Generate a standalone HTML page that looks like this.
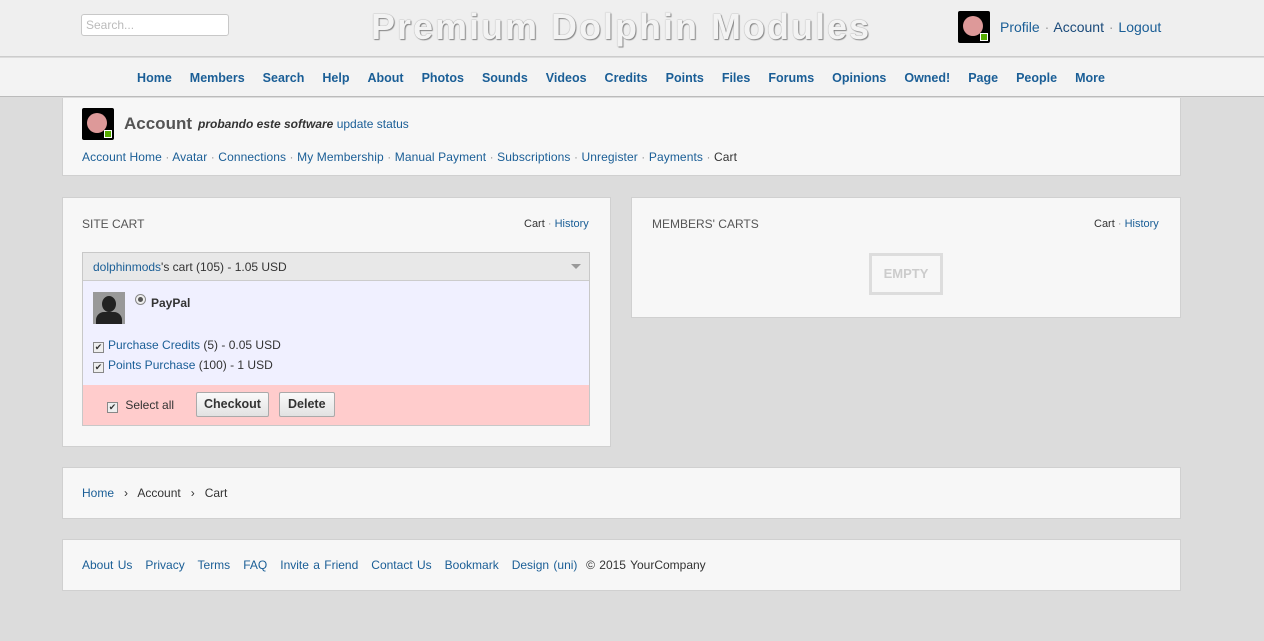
<!DOCTYPE html>
<html><head><meta charset="utf-8"><style>
*{box-sizing:border-box;margin:0;padding:0}
body{width:1264px;height:641px;background:#dcdcdc;font-family:"Liberation Sans",Arial,sans-serif;font-size:12px;color:#333;position:relative;overflow:hidden}
a{color:#1a5e96;text-decoration:none}
.abs{position:absolute}
.top{left:0;top:0;width:1264px;height:57px;background:#efefef;border-bottom:1px solid #ccc}
.nav{left:0;top:58px;width:1264px;height:39px;background:#f3f3f3;border-bottom:1px solid #bbb;text-align:center;font-weight:bold;font-size:12.5px;line-height:40px;padding-right:22px}
.nav a{margin:0 9px}
.box{background:#f7f7f7;border:1px solid #d0d0d0}
.sep{color:#999}
.btn{display:inline-block;border:1px solid #aaa;border-radius:2px;background:linear-gradient(#fafafa,#e2e2e2);font-weight:bold;font-size:12.5px;height:25px;line-height:23px;padding:0 8px;color:#333}
.cb{display:inline-block;width:11px;height:11px;border:1px solid #888;background:#eee;font-size:9px;line-height:9px;text-align:center;vertical-align:-1px;margin-right:4px}
</style></head><body>
<div class="abs top"></div>
<div class="abs" style="left:81px;top:14px;width:148px;height:22px;background:#fff;border:1px solid #c8c8c8;border-radius:3px;color:#bbb;padding:3px 4px">Search...</div>
<div class="abs" style="left:371px;top:6px;font-size:36px;font-weight:bold;color:#f3f3f3;text-shadow:0 0 1px #777,1px 1px 1px #888;letter-spacing:2px">Premium Dolphin Modules</div>
<div class="abs" style="left:958px;top:11px;width:32px;height:32px;background:#000;border-radius:2px"><div style="position:absolute;left:5px;top:5px;width:20px;height:20px;border-radius:50%;background:#d99"></div><div style="position:absolute;right:2px;bottom:2px;width:8px;height:8px;background:#5a0;border:1px solid #fff"></div></div>
<div class="abs" style="left:1000px;top:19px;font-size:14px;word-spacing:1px"><a>Profile</a> <span class="sep">·</span> <span style="color:#1a4a7a">Account</span> <span class="sep">·</span> <a>Logout</a></div>
<div class="abs nav"><a>Home</a><a>Members</a><a>Search</a><a>Help</a><a>About</a><a>Photos</a><a>Sounds</a><a>Videos</a><a>Credits</a><a>Points</a><a>Files</a><a>Forums</a><a>Opinions</a><a>Owned!</a><a>Page</a><a>People</a><a>More</a></div>
<div class="abs box" style="left:62px;top:98px;width:1119px;height:78px;border-top:0"></div>
<div class="abs" style="left:82px;top:108px;width:32px;height:32px;background:#000;border-radius:2px"><div style="position:absolute;left:5px;top:5px;width:20px;height:20px;border-radius:50%;background:#d99"></div><div style="position:absolute;right:2px;bottom:2px;width:8px;height:8px;background:#5a0;border:1px solid #fff"></div></div>
<div class="abs" style="left:124px;top:114px;font-size:17px;font-weight:bold;color:#555">Account</div>
<div class="abs" style="left:198px;top:117px;font-size:12px"><b><i>probando este software</i></b> <a>update status</a></div>
<div class="abs" style="left:82px;top:150px;font-size:12px;letter-spacing:0.1px"><a>Account Home</a> <span class="sep">·</span> <a>Avatar</a> <span class="sep">·</span> <a>Connections</a> <span class="sep">·</span> <a>My Membership</a> <span class="sep">·</span> <a>Manual Payment</a> <span class="sep">·</span> <a>Subscriptions</a> <span class="sep">·</span> <a>Unregister</a> <span class="sep">·</span> <a>Payments</a> <span class="sep">·</span> <span>Cart</span></div>

<div class="abs box" style="left:62px;top:197px;width:549px;height:250px"></div>
<div class="abs" style="left:82px;top:217px;color:#555">SITE CART</div>
<div class="abs" style="left:524px;top:218px;font-size:11px">Cart <span class="sep">·</span> <a>History</a></div>
<div class="abs" style="left:82px;top:252px;width:508px;height:174px;border:1px solid #c8c8c8;background:#f0f0ff"></div>
<div class="abs" style="left:83px;top:253px;width:506px;height:28px;background:#e8e8e8;border-bottom:1px solid #ccc;padding:7px 10px"><a>dolphinmods</a>'s cart (105) - 1.05 USD<span style="position:absolute;right:8px;top:11px;border:5px solid transparent;border-top:5px solid #999"></span></div>
<div class="abs" style="left:93px;top:292px;width:32px;height:32px;background:#999"><div style="position:absolute;left:9px;top:4px;width:14px;height:16px;border-radius:50%;background:#222"></div><div style="position:absolute;left:3px;top:20px;width:26px;height:12px;border-radius:8px 8px 0 0;background:#222"></div></div>
<div class="abs" style="left:135px;top:294px;width:11px;height:11px;border-radius:50%;border:1px solid #888;background:#eee"><div style="margin:2px;width:5px;height:5px;border-radius:50%;background:#555"></div></div>
<div class="abs" style="left:151px;top:296px;font-weight:bold">PayPal</div>
<div class="abs" style="left:93px;top:338px"><span class="cb">✔</span><a>Purchase Credits</a> (5) - 0.05 USD</div>
<div class="abs" style="left:93px;top:358px"><span class="cb">✔</span><a>Points Purchase</a> (100) - 1 USD</div>
<div class="abs" style="left:83px;top:385px;width:506px;height:40px;background:#ffcccc"></div>
<div class="abs" style="left:107px;top:398px"><span class="cb">✔</span> Select all</div>
<div class="abs btn" style="left:196px;top:392px;width:73px;text-align:center;padding:0">Checkout</div>
<div class="abs btn" style="left:279px;top:392px">Delete</div>

<div class="abs box" style="left:631px;top:197px;width:550px;height:121px"></div>
<div class="abs" style="left:652px;top:217px;color:#555">MEMBERS' CARTS</div>
<div class="abs" style="left:1094px;top:218px;font-size:11px">Cart <span class="sep">·</span> <a>History</a></div>
<div class="abs" style="left:869px;top:253px;width:74px;height:42px;border:3px solid #ddd;color:#ccc;font-weight:bold;font-size:13px;text-align:center;line-height:36px">EMPTY</div>

<div class="abs box" style="left:62px;top:467px;width:1119px;height:52px"></div>
<div class="abs" style="left:82px;top:486px"><a>Home</a> &nbsp; › &nbsp; <a style="color:#333">Account</a> &nbsp; › &nbsp; Cart</div>
<div class="abs box" style="left:62px;top:539px;width:1119px;height:52px"></div>
<div class="abs" style="left:82px;top:558px;word-spacing:1px"><a>About Us</a> &nbsp; <a>Privacy</a> &nbsp; <a>Terms</a> &nbsp; <a>FAQ</a> &nbsp; <a>Invite a Friend</a> &nbsp; <a>Contact Us</a> &nbsp; <a>Bookmark</a> &nbsp; <a>Design (uni)</a> &nbsp;© 2015 YourCompany</div>
</body></html>
